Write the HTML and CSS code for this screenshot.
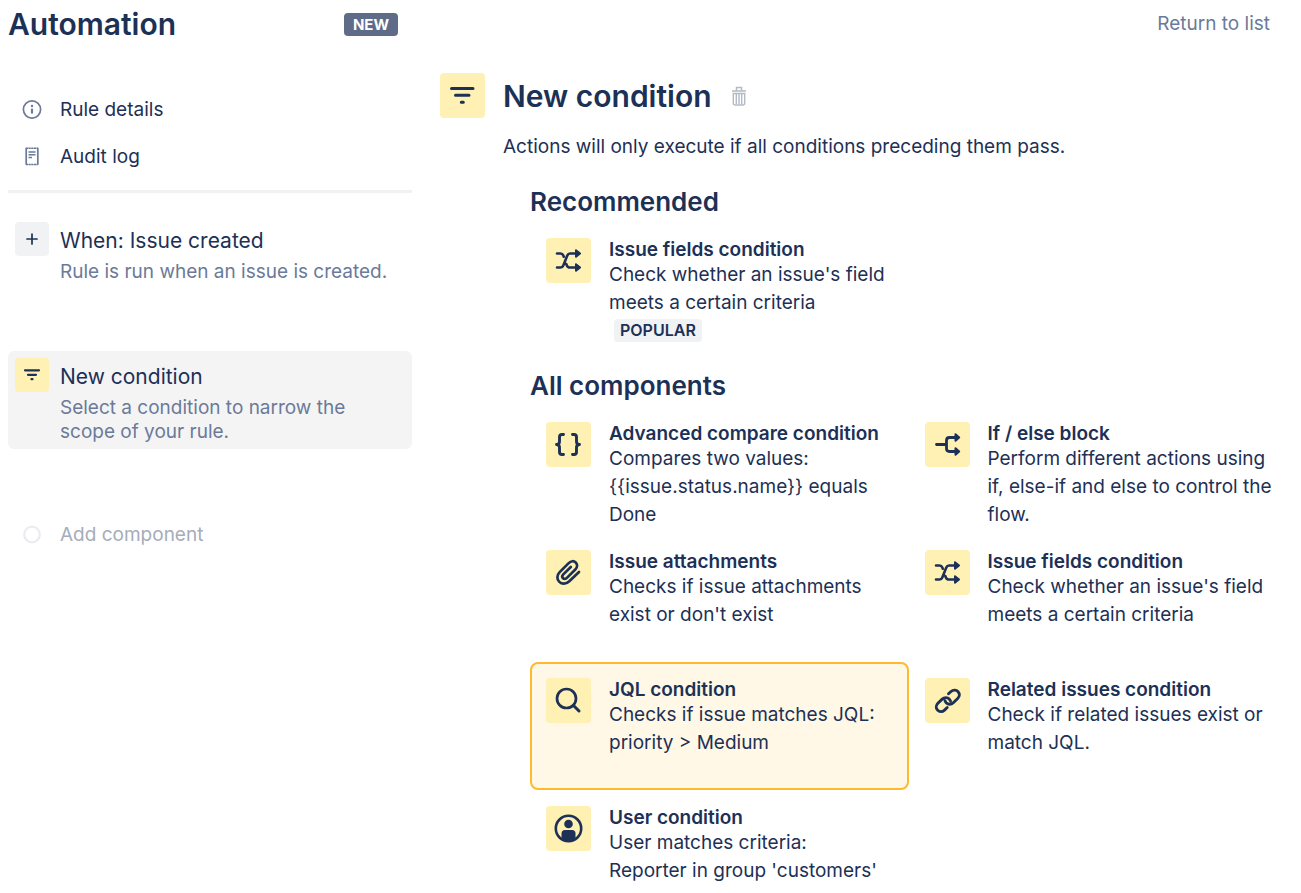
FILE: index.html
```html
<!DOCTYPE html>
<html lang="en">
<head>
<meta charset="utf-8">
<meta name="viewport" content="width=device-width, initial-scale=1">
<title>Automation</title>
<link rel="stylesheet" href="styles.css">
</head>
<body>
<svg class="sprite" aria-hidden="true">
  <symbol id="filter" viewBox="0 0 45 45"><path d="M11.500 15.500h21.500M15.500 22.300h13.500M21.300 29.200h2" fill="none" stroke="currentColor" stroke-width="3" stroke-linecap="round"/></symbol>
  <symbol id="shuffle" viewBox="0 0 45 45"><path d="M11 15.500h3.500q2 0 2.800 2l.5 1.200M11 29.500h3.500q2 0 2.800-2l4-10q.8-2 2.800-2h6M20.300 26l.6 1.500q.8 2 3 2h6" fill="none" stroke="currentColor" stroke-width="2.600" stroke-linecap="round" stroke-linejoin="round"/><path d="M30 12.200v6.600l4-3.300zM30 26.200v6.600l4-3.300z" fill="currentColor" stroke="currentColor" stroke-width="2" stroke-linejoin="round"/></symbol>
  <symbol id="braces" viewBox="0 0 45 45"><path d="M17.500 12.500h-1.500q-2.500 0-2.500 2.500v4.500q0 3-3 3 3 0 3 3V30q0 2.500 2.500 2.500h1.500M26.500 12.500h1.500q2.500 0 2.500 2.500v4.500q0 3 3 3-3 0-3 3V30q0 2.500-2.500 2.500h-1.500" fill="none" stroke="currentColor" stroke-width="2.900" stroke-linecap="round" stroke-linejoin="round"/></symbol>
  <symbol id="branch" viewBox="0 0 45 45"><path d="M11.500 22.500H21M31 15.500h-6.500q-3 0-3 3v8q0 3 3 3H31" fill="none" stroke="currentColor" stroke-width="2.800" stroke-linecap="round" stroke-linejoin="round"/><path d="M30.500 12.200v6.600l3.700-3.300zM30.500 26.200v6.600l3.700-3.300z" fill="currentColor" stroke="currentColor" stroke-width="2" stroke-linejoin="round"/></symbol>
  <symbol id="clip" viewBox="0 0 45 45"><path d="M33 22l-9.700 9.300c-3.300 3.200-7.500 3-10 .6s-2.800-6.600.6-10l8.800-8.800c2.400-2.400 5.200-2.400 7-.6s2 4.600-.4 7l-8.400 8.400c-1.300 1.300-2.900 1.300-3.900.3s-1-2.500.3-3.800l7.500-7.400" fill="none" stroke="currentColor" stroke-width="2.700" stroke-linecap="round" stroke-linejoin="round"/></symbol>
  <symbol id="link" viewBox="0 0 45 45"><path d="M23.500 15.800l2.500-2.300c2.300-2.100 5.400-1.700 7.100.2s1.700 4.700-.4 6.800l-4.400 4.200c-2.100 2-5.200 2-7.100 0q-.8-.9-1.200-2M22.200 29.500l-2.700 2.600c-2.300 2.100-5.300 1.800-7 0s-1.700-4.700.4-6.800l4.300-4.200c2.100-2 5.200-2 7.100 0q.8.900 1.200 2" fill="none" stroke="currentColor" stroke-width="2.900" stroke-linecap="round" stroke-linejoin="round"/></symbol>
  <symbol id="search" viewBox="0 0 45 45"><circle cx="20.500" cy="20.500" r="9.500" fill="none" stroke="currentColor" stroke-width="2.700"/><path d="M27.500 27.500l5.500 5.500" stroke="currentColor" stroke-width="3" stroke-linecap="round"/></symbol>
  <symbol id="user" viewBox="0 0 45 45"><circle cx="22.500" cy="22.500" r="12.700" fill="none" stroke="currentColor" stroke-width="2.600"/><circle cx="22.500" cy="18" r="4.300" fill="currentColor"/><path d="M15.500 33v-5.500q0-3.500 3.500-3.500h7q3.500 0 3.500 3.500V33q-7 4-14 0z" fill="currentColor"/></symbol>
</svg>
<div class="page">
  <aside class="sidebar">
    <header class="sidebar-header">
      <h1 class="sidebar-title">Automation</h1>
      <span class="badge badge-new">NEW</span>
    </header>
    <nav class="rule-nav">
      <a class="nav-item" href="#details">
        <svg class="nav-icon" viewBox="0 0 20 20" aria-hidden="true"><circle cx="10" cy="9.500" r="8.600" fill="none" stroke="currentColor" stroke-width="1.700"/><circle cx="10" cy="6" r="1.200" fill="currentColor"/><path d="M10 9.500v3.200" stroke="currentColor" stroke-width="2.200" stroke-linecap="round"/></svg>
        Rule details
      </a>
      <a class="nav-item" href="#audit">
        <svg class="nav-icon" viewBox="0 0 20 20" aria-hidden="true"><path d="M4.200 .8v17M15.800 .8v17" stroke="currentColor" stroke-width="1.700"/><path d="M4 1.200h12M4 17.500h12" stroke="currentColor" stroke-width="1.600" stroke-dasharray="2.200 .4"/><path d="M6.500 5h7M6.500 7.700h7M6.500 10.500h3.500" stroke="currentColor" stroke-width="1.500"/></svg>
        Audit log
      </a>
    </nav>
    <hr class="divider">
    <div class="steps">
      <button class="step" type="button">
        <span class="step-icon step-icon-gray"><svg viewBox="0 0 34 34" aria-hidden="true"><path d="M17 12v10M12 17h10" stroke="currentColor" stroke-width="1.700" stroke-linecap="round"/></svg></span>
        <span class="step-text"><span class="step-title">When: Issue created</span><span class="step-note">Rule is run when an issue is created.</span></span>
      </button>
      <button class="step step-selected" type="button" aria-current="step">
        <span class="step-icon"><svg viewBox="0 0 34 34" aria-hidden="true"><path d="M10 12.300h14M13 16.800h8M16.500 21.200h1" stroke="currentColor" stroke-width="2.200" stroke-linecap="round"/></svg></span>
        <span class="step-text"><span class="step-title">New condition</span><span class="step-note">Select a condition to narrow the scope of your rule.</span></span>
      </button>
      <button class="nav-item nav-add" type="button"><svg class="nav-icon" viewBox="0 0 20 20" aria-hidden="true"><circle cx="10" cy="9.500" r="7.800" fill="none" stroke="#ebecf0" stroke-width="2.300"/></svg><span>Add component</span></button>
    </div>
  </aside>
  <main class="main">
    <div class="toolbar"><a class="return-link" href="#list">Return to list</a></div>
    <div class="condition">
      <svg class="tile" aria-hidden="true"><use href="#filter"/></svg>
      <div class="condition-body">
        <div class="condition-header">
          <h2 class="condition-title">New condition</h2>
          <button class="delete" type="button" aria-label="Delete condition"><svg class="trash" viewBox="0 0 16 20" aria-hidden="true"><path d="M1 5h14M5.500 4.500v-3h5v3" fill="none" stroke="currentColor" stroke-width="1.500"/><path d="M2.300 7.500h11.400V17q0 2-2 2H4.300q-2 0-2-2zM5.300 8v10M8 8v10M10.700 8v10" fill="none" stroke="currentColor" stroke-width="1.400"/></svg></button>
        </div>
        <p class="intro">Actions will only execute if all conditions preceding them pass.</p>
        <section class="group">
          <h3 class="group-title">Recommended</h3>
          <div class="cards cards-recommended">
            <button class="card" type="button"><svg class="tile" aria-hidden="true"><use href="#shuffle"/></svg><span class="card-text"><span class="card-title">Issue fields condition</span><span class="card-note">Check whether an issue's field meets a certain criteria</span><span class="badge badge-popular">POPULAR</span></span></button>
          </div>
        </section>
        <section class="group">
          <h3 class="group-title">All components</h3>
          <div class="cards cards-all">
            <button class="card" type="button"><svg class="tile" aria-hidden="true"><use href="#braces"/></svg><span class="card-text"><span class="card-title">Advanced compare condition</span><span class="card-note">Compares two values: {{issue.status.name}} equals Done</span></span></button>
            <button class="card" type="button"><svg class="tile" aria-hidden="true"><use href="#branch"/></svg><span class="card-text"><span class="card-title">If / else block</span><span class="card-note">Perform different actions using if, else-if and else to control the flow.</span></span></button>
            <button class="card" type="button"><svg class="tile" aria-hidden="true"><use href="#clip"/></svg><span class="card-text"><span class="card-title">Issue attachments</span><span class="card-note">Checks if issue attachments exist or don't exist</span></span></button>
            <button class="card" type="button"><svg class="tile" aria-hidden="true"><use href="#shuffle"/></svg><span class="card-text"><span class="card-title">Issue fields condition</span><span class="card-note">Check whether an issue's field meets a certain criteria</span></span></button>
            <button class="card card-selected" type="button"><svg class="tile" aria-hidden="true"><use href="#search"/></svg><span class="card-text"><span class="card-title">JQL condition</span><span class="card-note">Checks if issue matches JQL: priority &gt; Medium</span></span></button>
            <button class="card" type="button"><svg class="tile" aria-hidden="true"><use href="#link"/></svg><span class="card-text"><span class="card-title">Related issues condition</span><span class="card-note">Check if related issues exist or match JQL.</span></span></button>
            <button class="card" type="button"><svg class="tile" aria-hidden="true"><use href="#user"/></svg><span class="card-text"><span class="card-title">User condition</span><span class="card-note">User matches criteria:<br>Reporter in group 'customers'</span></span></button>
          </div>
        </section>
      </div>
    </div>
  </main>
</div>
</body>
</html>
```
FILE: styles.css
```css
* { box-sizing: border-box; }

body {
  margin: 0;
  background: #fff;
  color: #1d3055;
  font-family: Inter, "Liberation Sans", sans-serif;
  font-size: 19px;
  line-height: 24px;
}

h1, h2, h3, p { margin: 0; }

button {
  border: 0;
  padding: 0;
  background: none;
  color: inherit;
  font: inherit;
  text-align: left;
  cursor: pointer;
}

a { color: inherit; text-decoration: none; }

.sprite { display: none; }

.page {
  display: grid;
  grid-template-columns: 404px minmax(0, 1fr);
  gap: 28px;
  padding: 0 14px 0 8px;
}

.sidebar-header {
  display: flex;
  align-items: center;
  justify-content: space-between;
  height: 48px;
  padding-right: 14px;
}

.sidebar-title {
  font-size: 30px;
  font-weight: 600;
  line-height: 40px;
}

.badge {
  border-radius: 4px;
  font-weight: 700;
}

.badge-new {
  padding: 0 9px;
  background: #5e6c8a;
  color: #fff;
  font-size: 15px;
  line-height: 23px;
}

.rule-nav { padding-top: 38px; }

.nav-item {
  display: flex;
  align-items: center;
  gap: 18px;
  height: 47px;
  padding-left: 14px;
}

.nav-icon {
  flex: none;
  width: 20px;
  height: 20px;
  color: #6b7a99;
}

.nav-add { color: #a5adba; }

.divider {
  height: 3px;
  margin: 10px 0 22px;
  border: 0;
  background: #f1f1f2;
}

.steps {
  display: flex;
  flex-direction: column;
  gap: 62px;
}

.step {
  display: flex;
  gap: 11px;
  padding: 7px 7px 5px;
  border-radius: 6px;
}

.step-selected { background: #f4f4f5; }

.step-icon {
  flex: none;
  width: 34px;
  height: 34px;
  border-radius: 4px;
  background: #fff0b3;
}

.step-icon svg { display: block; }
.step-icon-gray { background: #f1f2f4; }

.step-text { padding-top: 5px; }
.step-title { display: block; font-size: 21px; line-height: 28px; }
.step-note { display: block; padding-top: 5px; color: #6b7a99; }

.toolbar {
  display: flex;
  justify-content: flex-end;
  padding: 12px 17px 0 0;
  color: #6b7a99;
}

.condition {
  display: flex;
  gap: 18px;
  padding-top: 37px;
}

.condition-body { flex: 1; min-width: 0; }

.tile {
  flex: none;
  width: 45px;
  height: 45px;
  border-radius: 4px;
  background: #fff0b3;
}

.condition-header {
  display: flex;
  align-items: center;
  gap: 19px;
  height: 45px;
}

.condition-title {
  font-size: 30px;
  font-weight: 600;
  line-height: 44px;
}

.delete { color: #b3bac5; }
.trash { display: block; width: 16px; height: 20px; }

.intro { padding-top: 17px; }
.group { padding-left: 27px; }
.intro + .group { padding-top: 27px; }

.group-title {
  font-size: 26px;
  font-weight: 600;
  line-height: 32px;
}

.cards {
  display: grid;
  grid-template-columns: repeat(2, minmax(0, 1fr));
  padding-top: 4px;
}

.cards-recommended { grid-template-rows: minmax(148px, auto); }
.cards-all { grid-template-rows: repeat(3, minmax(128px, auto)) auto; }

.card {
  display: flex;
  align-items: flex-start;
  gap: 18px;
  padding: 14px 10px 3px 14px;
  border: 2px solid transparent;
  border-radius: 8px;
}

.card-selected {
  border-color: #ffb92e;
  background: #fff8e6;
}

.card-title { display: block; font-weight: 600; line-height: 23px; }
.card-note { display: block; line-height: 28px; }

.badge-popular {
  display: inline-block;
  margin: 2px 5px 0;
  padding: 0 6px;
  background: #f1f2f4;
  font-size: 16px;
  font-weight: 600;
  line-height: 23px;
}
```
